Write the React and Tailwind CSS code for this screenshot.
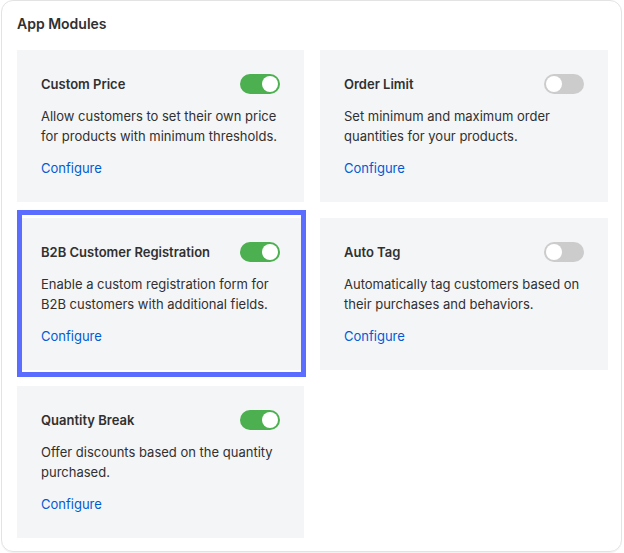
import React from "react";

const modules = [
  { title: "Custom Price", desc: "Allow customers to set their own price for products with minimum thresholds.", on: true },
  { title: "Order Limit", desc: "Set minimum and maximum order quantities for your products.", on: false },
  { title: "B2B Customer Registration", desc: "Enable a custom registration form for B2B customers with additional fields.", on: true, selected: true },
  { title: "Auto Tag", desc: "Automatically tag customers based on their purchases and behaviors.", on: false },
  { title: "Quantity Break", desc: "Offer discounts based on the quantity purchased.", on: true },
];

function Toggle({ on }) {
  return (
    <div className={on ? "w-10 h-5 rounded-full bg-[#4caf50] flex items-center justify-end px-[2px]" : "w-10 h-5 rounded-full bg-[#cccccc] flex items-center justify-start px-[2px]"}>
      <div className="w-4 h-4 rounded-full bg-white" />
    </div>
  );
}

function Card({ m }) {
  return (
    <div className="relative bg-[#f4f5f7] h-[152px] px-6 pt-6">
      {m.selected && (
        <div className="absolute left-0 -right-[2px] -top-[8px] -bottom-[7px] border-[5px] border-[#5a6dff] pointer-events-none" />
      )}
      <div className="flex items-center justify-between h-5">
        <span className="text-[13px] font-semibold text-[#303030] leading-5">{m.title}</span>
        <Toggle on={m.on} />
      </div>
      <p className="mt-3 text-[13px] leading-5 text-[#303030]">{m.desc}</p>
      <div className="mt-3 text-[13px] leading-5 text-[#005bd3]">Configure</div>
    </div>
  );
}

export default function App() {
  return (
    <div className="w-[624px] h-[553px] bg-white" style={{ fontFamily: "Inter, 'Noto Sans', sans-serif" }}>
      <div className="ml-[1px] w-[621px] h-[552px] rounded-xl border border-[#e3e3e3] pl-[15px] pt-[13px] shadow-[0_1px_0_rgba(0,0,0,0.05)]">
        <h2 className="text-[14px] leading-5 font-semibold text-[#303030]">App Modules</h2>
        <div className="mt-4 grid grid-cols-[287px_288px] gap-4">
          {modules.map((m) => (
            <Card key={m.title} m={m} />
          ))}
        </div>
      </div>
    </div>
  );
}
